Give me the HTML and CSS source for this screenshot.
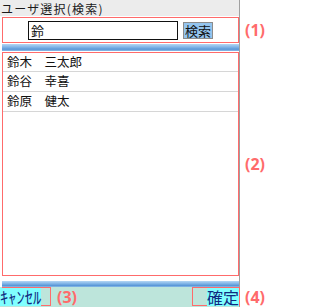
FILE: index.html
```html
<!DOCTYPE html>
<html lang="ja">
<head>
<meta charset="utf-8">
<title>ユーザ選択(検索)</title>
<link rel="stylesheet" href="styles.css">
</head>
<body>
<div class="page">
  <div class="cell title">ユーザ選択(検索)</div>

  <div class="cell search-cell">
    <div class="search-box">
      <div class="search-input">鈴</div>
      <button class="search-btn" type="button">検索</button>
    </div>
  </div>
  <div class="note note-1">(1)</div>

  <div class="cell bar-cell"><div class="bar"></div></div>

  <div class="cell list-cell">
    <ul class="user-list">
      <li class="user-row">鈴木　三太郎</li>
      <li class="user-row">鈴谷　幸喜</li>
      <li class="user-row">鈴原　健太</li>
    </ul>
  </div>
  <div class="note note-2">(2)</div>

  <div class="cell bar-cell bar-cell-2"><div class="bar bar-2"></div></div>

  <div class="cell footer">
    <div class="cancel-box"><span class="cancel">ｷｬﾝｾﾙ</span></div>
    <span class="note note-3">(3)</span>
    <div class="ok-box"><span class="ok">確定</span></div>
  </div>
  <div class="note note-4">(4)</div>
</div>
</body>
</html>
```

FILE: styles.css
```css
html, body {
  margin: 0;
  padding: 0;
  background: #ffffff;
}

body {
  font-family: "Noto Sans CJK JP", "Noto Sans", sans-serif;
  color: #111111;
}

.page {
  display: grid;
  grid-template-columns: 240px 30px;
  grid-template-rows: 16px 27px 8px 225px 11px 20px;
}

.cell {
  grid-column: 1;
  box-sizing: border-box;
  border-right: 1px solid #a0a0a0;
  background: #ffffff;
}

.title {
  grid-row: 1;
  background: #ececec;
  font-size: 12px;
  line-height: 15px;
  padding: 1px 0 0 1px;
  letter-spacing: 1.2px;
  color: #1a1a1a;
  white-space: nowrap;
}

.search-cell {
  grid-row: 2;
  padding: 1px 0 0 2px;
}

.search-box {
  box-sizing: border-box;
  height: 26px;
  border: 1px solid #ff6b6b;
  display: flex;
  align-items: center;
  gap: 5px;
  padding-left: 25px;
}

.search-input {
  box-sizing: border-box;
  width: 150px;
  height: 19px;
  border: 1px solid #111111;
  background: #ffffff;
  font-size: 13px;
  line-height: 17px;
  padding-left: 2px;
}

.search-btn {
  box-sizing: border-box;
  width: 30px;
  height: 17px;
  margin: 0;
  padding: 0;
  border: 1px solid #8c8c8c;
  background: #94c4ee;
  font-family: "Noto Sans CJK JP", sans-serif;
  font-size: 13px;
  line-height: 15px;
  color: #111111;
}

.bar-cell {
  grid-row: 3;
  padding: 1px 0 0 2px;
}

.bar {
  height: 7px;
  background: linear-gradient(#b4d6f4 0%, #7fb3e6 45%, #5b98d8 75%, #8cbbe8 100%);
}

.list-cell {
  grid-row: 4;
  padding: 1px 0 0 2px;
}

.user-list {
  list-style: none;
  margin: 0;
  padding: 0;
  box-sizing: border-box;
  height: 224px;
  border: 1px solid #ff6b6b;
}

.user-row {
  height: 19px;
  border-bottom: 1px solid #d6d6d6;
  font-size: 12.5px;
  line-height: 18px;
  padding-left: 4px;
  color: #111111;
  white-space: nowrap;
}

.user-row:first-child {
  height: 18px;
}

.bar-cell-2 {
  grid-row: 5;
  padding: 5px 0 0 2px;
}

.bar-2 {
  height: 6px;
}

.footer {
  grid-row: 6;
  background: #bde5db;
  display: flex;
  align-items: stretch;
  padding-bottom: 1px;
}

.cancel-box {
  box-sizing: border-box;
  width: 49px;
  margin-left: 2px;
  border: 1px solid #ff6b6b;
  display: flex;
  align-items: center;
}

.cancel {
  margin-left: -3px;
  background: #80ffff;
  color: #102a80;
  font-size: 16.5px;
  line-height: 18px;
}

.ok-box {
  box-sizing: border-box;
  width: 48px;
  margin-left: auto;
  margin-right: -1px;
  border: 1px solid #ff6b6b;
  display: flex;
  align-items: center;
  justify-content: flex-end;
}

.ok {
  background: #80ffff;
  color: #102a80;
  font-size: 16px;
  line-height: 18px;
}

.note {
  font-family: "Noto Sans", "Open Sans", sans-serif;
  font-weight: 700;
  font-size: 16px;
  color: #ff6b6b;
  line-height: 18px;
}

.note-1, .note-2, .note-4 {
  grid-column: 2;
  align-self: center;
  padding-left: 5px;
}

.note-1 { grid-row: 2; }
.note-2 { grid-row: 4; }
.note-4 { grid-row: 6; }

.note-3 {
  align-self: center;
  margin-left: 6px;
}
```
